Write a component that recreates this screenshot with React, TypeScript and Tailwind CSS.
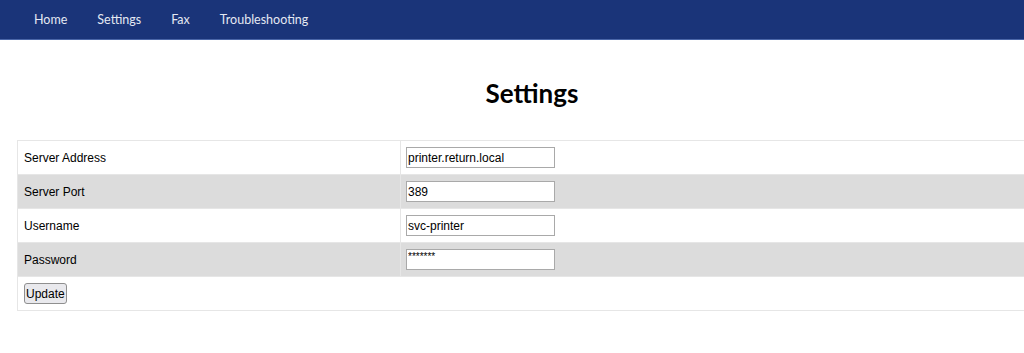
import React from 'react'

const rows = [
  { label: 'Server Address', value: 'printer.return.local', type: 'text' },
  { label: 'Server Port', value: '389', type: 'text' },
  { label: 'Username', value: 'svc-printer', type: 'text' },
  { label: 'Password', value: '*******', type: 'password' },
]

const navLinks = ['Home', 'Settings', 'Fax', 'Troubleshooting']

export default function App() {
  return (
    <div className="min-h-[353px] w-[1024px] overflow-hidden bg-white">
      {/* Nav */}
      <nav className="flex h-[40px] items-center border-b border-[#4a66a8] bg-[#1a3479] pl-[19px] pt-[2px] font-['Lato',sans-serif] text-[12.5px] text-[#e4e8f2]">
        {navLinks.map((link) => (
          <a key={link} href="#" className="px-[15px]">
            {link}
          </a>
        ))}
      </nav>

      <div className="w-[1064px]">
        <h1 className="mt-[37px] mb-[31px] text-center font-['Lato',sans-serif] text-[26px] font-bold leading-[32px] text-black">
          Settings
        </h1>

        {/* Settings table */}
        <div className="ml-[17px] w-[1030px] border-t border-b border-l border-[#e6e6e6] font-['Liberation_Sans',sans-serif] text-[12px] text-black">
          {rows.map((row, i) => (
            <div
              key={row.label}
              className={`grid h-[34px] grid-cols-[383px_1fr] border-b border-[#e6e6e6] ${i % 2 === 1 ? 'bg-[#dcdcdc]' : 'bg-white'}`}
            >
              <div className="flex items-center border-r border-[#e6e6e6] pl-[6px]">{row.label}</div>
              <div className="flex items-center pl-[5px]">
                <input
                  type="text"
                  defaultValue={row.value}
                  className={`h-[21px] w-[149px] border border-[#a9a9a9] bg-white px-[1px] font-['Liberation_Sans',sans-serif] text-black outline-none ${row.type === 'password' ? 'text-[10px] leading-[10px] pb-[6px]' : 'text-[12px]'}`}
                />
              </div>
            </div>
          ))}
          <div className="flex h-[33px] items-center pl-[6px]">
            <button className="h-[21px] rounded-[3px] border border-[#8f8f8f] bg-[#e9e9ed] px-[1px] font-['Liberation_Sans',sans-serif] text-[12px] text-black">
              Update
            </button>
          </div>
        </div>
      </div>
    </div>
  )
}
